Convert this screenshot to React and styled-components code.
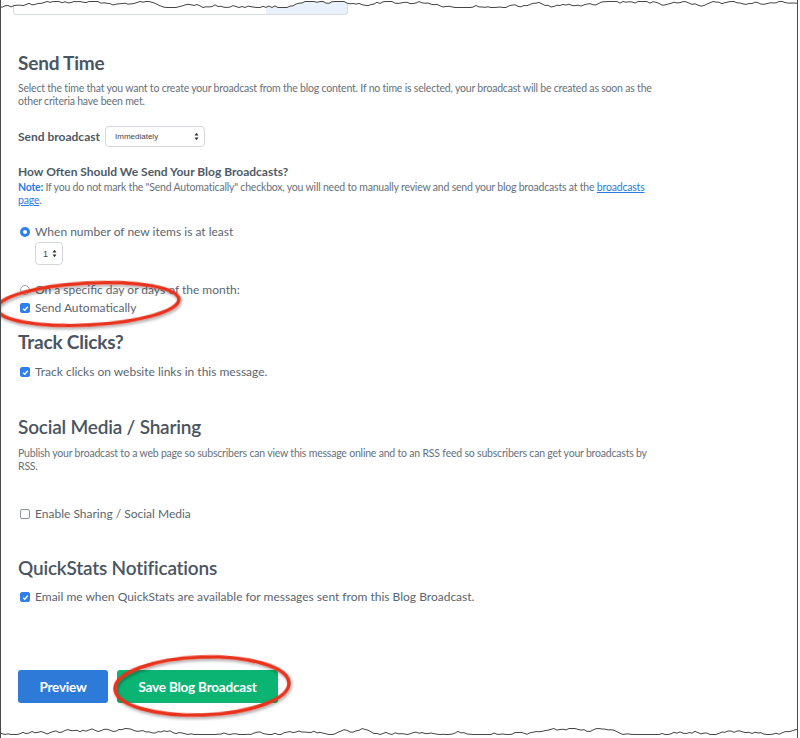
import React from 'react';
import styled, { createGlobalStyle } from 'styled-components';

const GlobalStyle = createGlobalStyle`
  body {
    margin: 0;
    background: #fff;
    font-family: Lato, "Open Sans", sans-serif;
  }
`;

const Frame = styled.div`
  position: relative;
  width: 796px;
  height: 738px;
  overflow: hidden;
  border-left: 1px solid #4a4a4a;
  border-right: 1px solid #4a4a4a;
  background: #fff;
`;

const Content = styled.div`
  padding-left: 17px;
  color: #5b6570;
`;

const TextareaStub = styled.div`
  position: relative;
  margin-left: -5px;
  width: 333px;
  height: 14px;
  border: 1px solid #d8dde3;
  border-top: none;
  border-radius: 0 0 3px 3px;
  background: linear-gradient(to right, #fff 0, #fff 252px, #e9f2fc 252px);
`;

const Heading = styled.h2`
  margin: ${p => p.$top}px 0 0;
  font-size: 19px;
  line-height: 24px;
  font-weight: ${p => p.$weight || 700};
  letter-spacing: -0.2px;
  color: #4a5561;
`;

const Para = styled.p`
  margin: ${p => p.$top}px 0 0;
  max-width: 640px;
  font-size: 10.5px;
  line-height: 13px;
  letter-spacing: -0.2px;
  color: #67717b;
`;

const SubHeading = styled.h4`
  margin: ${p => p.$top}px 0 0;
  font-size: 12px;
  line-height: 16px;
  font-weight: 700;
  color: #4f5a65;
`;

const NoteLabel = styled.b`
  color: #2c7be5;
`;

const Link = styled.a`
  color: #2c7be5;
  text-decoration: underline;
`;

const Row = styled.div`
  display: flex;
  align-items: center;
  gap: ${p => p.$gap || 5}px;
  margin: ${p => p.$top}px 0 0 ${p => p.$left || 0}px;
  min-height: 16px;
  font-size: 12px;
  line-height: 16px;
  color: #5b6570;
`;

const FieldLabel = styled.span`
  font-size: 12px;
  font-weight: 700;
  color: #4f5a65;
`;

const Select = styled.div`
  display: flex;
  align-items: center;
  justify-content: space-between;
  box-sizing: border-box;
  width: ${p => p.$w}px;
  height: ${p => p.$h}px;
  padding: 0 5px 0 ${p => p.$pl || 9}px;
  border: 1px solid #d3d7dc;
  border-radius: 4px;
  font-family: "Liberation Sans", Arial, sans-serif;
  font-size: ${p => p.$fs || 8}px;
  color: #444;
  background: #fff;
`;

const Radio = styled.span`
  box-sizing: border-box;
  width: 10px;
  height: 10px;
  margin-left: 2px;
  border-radius: 50%;
  border: ${p => (p.$on ? '3px solid #2f80ed' : '1px solid #9aa1a8')};
  background: #fff;
`;

const Check = styled.span`
  box-sizing: border-box;
  display: flex;
  align-items: center;
  justify-content: center;
  width: 10px;
  height: 10px;
  margin-left: 2px;
  border-radius: 2px;
  border: 1px solid ${p => (p.$on ? '#2f80ed' : '#8d949b')};
  background: ${p => (p.$on ? '#2f80ed' : '#fff')};
`;

const Buttons = styled.div`
  display: flex;
  gap: 9px;
  margin-top: 65px;
`;

const Button = styled.button`
  height: 33px;
  width: ${p => p.$w}px;
  border: none;
  border-radius: 3px;
  background: ${p => p.$bg};
  color: #fff;
  font-family: Lato, sans-serif;
  font-size: 13.5px;
  font-weight: 700;
  letter-spacing: -0.2px;
`;

const Overlay = styled.svg`
  position: absolute;
  left: 0;
  top: 0;
  pointer-events: none;
`;

function tornLine(y0, amp, seed) {
  let s = seed;
  const rnd = () => {
    s = (s * 9301 + 49297) % 233280;
    return s / 233280;
  };
  const pts = [];
  let y = y0;
  for (let x = -2; x <= 802; x += 3) {
    y += (rnd() - 0.5) * amp;
    y = Math.max(y0 - 3, Math.min(y0 + 3, y));
    pts.push(`${x},${y.toFixed(1)}`);
  }
  return pts;
}

const topPts = tornLine(4.5, 3.5, 17);
const botPts = tornLine(731.5, 3.5, 91);

const Tick = () => (
  <svg width="7" height="7" viewBox="0 0 8 8">
    <path d="M1.3 4.2 L3.2 6 L6.7 1.8" fill="none" stroke="#fff" strokeWidth="1.6" />
  </svg>
);

const Arrows = () => (
  <svg width="5" height="9" viewBox="0 0 5 9">
    <path d="M0.5 3.5 L2.5 0.8 L4.5 3.5 Z M0.5 5.5 L2.5 8.2 L4.5 5.5 Z" fill="#333" />
  </svg>
);

export default function App() {
  return (
    <>
      <GlobalStyle />
      <Frame>
        <Content>
          <TextareaStub />

          <Heading $top={36}>Send Time</Heading>
          <Para $top={7}>
            Select the time that you want to create your broadcast from the blog content. If no time is selected, your broadcast will be created as soon as the other criteria have been met.
          </Para>

          <Row $top={18} $gap={5}>
            <FieldLabel>Send broadcast</FieldLabel>
            <Select $w={100} $h={21}>
              Immediately
              <Arrows />
            </Select>
          </Row>

          <SubHeading $top={17}>How Often Should We Send Your Blog Broadcasts?</SubHeading>
          <Para $top={1}>
            <NoteLabel>Note:</NoteLabel> If you do not mark the "Send Automatically" checkbox, you will need to manually review and send your blog broadcasts at the <Link href="#">broadcasts page</Link>.
          </Para>

          <Row $top={17}>
            <Radio $on />
            <span>When number of new items is at least</span>
          </Row>
          <Row $top={2} $left={17}>
            <Select $w={28} $h={23} $fs={9} $pl={7}>
              1
              <Arrows />
            </Select>
          </Row>

          <Row $top={17}>
            <Radio />
            <span>On a specific day or days of the month:</span>
          </Row>
          <Row $top={2}>
            <Check $on><Tick /></Check>
            <span>Send Automatically</span>
          </Row>

          <Heading $top={14}>Track Clicks?</Heading>
          <Row $top={10}>
            <Check $on><Tick /></Check>
            <span>Track clicks on website links in this message.</span>
          </Row>

          <Heading $top={35} $weight={600}>Social Media / Sharing</Heading>
          <Para $top={8}>
            Publish your broadcast to a web page so subscribers can view this message online and to an RSS feed so subscribers can get your broadcasts by RSS.
          </Para>
          <Row $top={33}>
            <Check />
            <span>Enable Sharing / Social Media</span>
          </Row>

          <Heading $top={34} $weight={600}>QuickStats Notifications</Heading>
          <Row $top={9}>
            <Check $on><Tick /></Check>
            <span>Email me when QuickStats are available for messages sent from this Blog Broadcast.</span>
          </Row>

          <Buttons>
            <Button $w={90} $bg="#2d7ad8">Preview</Button>
            <Button $w={161} $bg="#0bb472">Save Blog Broadcast</Button>
          </Buttons>
        </Content>

        <Overlay width="798" height="738" viewBox="0 0 798 738">
          <defs>
            <filter id="sh" x="-20%" y="-40%" width="140%" height="180%">
              <feDropShadow dx="1" dy="2" stdDeviation="1.5" floodColor="#000" floodOpacity="0.35" />
            </filter>
          </defs>
          <polygon points={`-2,-2 ${topPts.join(' ')} 802,-2`} fill="#fff" />
          <polyline points={topPts.join(' ')} fill="none" stroke="#444" strokeWidth="1" />
          <polygon points={`-2,740 ${botPts.join(' ')} 802,740`} fill="#fff" />
          <polyline points={botPts.join(' ')} fill="none" stroke="#444" strokeWidth="1" />
          <ellipse cx="87" cy="304" rx="91" ry="21" transform="rotate(-3 87 304)" fill="none" stroke="#e8321d" strokeWidth="3.5" filter="url(#sh)" />
          <ellipse cx="201" cy="686" rx="87" ry="29" transform="rotate(-2 201 686)" fill="none" stroke="#e8321d" strokeWidth="3.5" filter="url(#sh)" />
        </Overlay>
      </Frame>
    </>
  );
}
